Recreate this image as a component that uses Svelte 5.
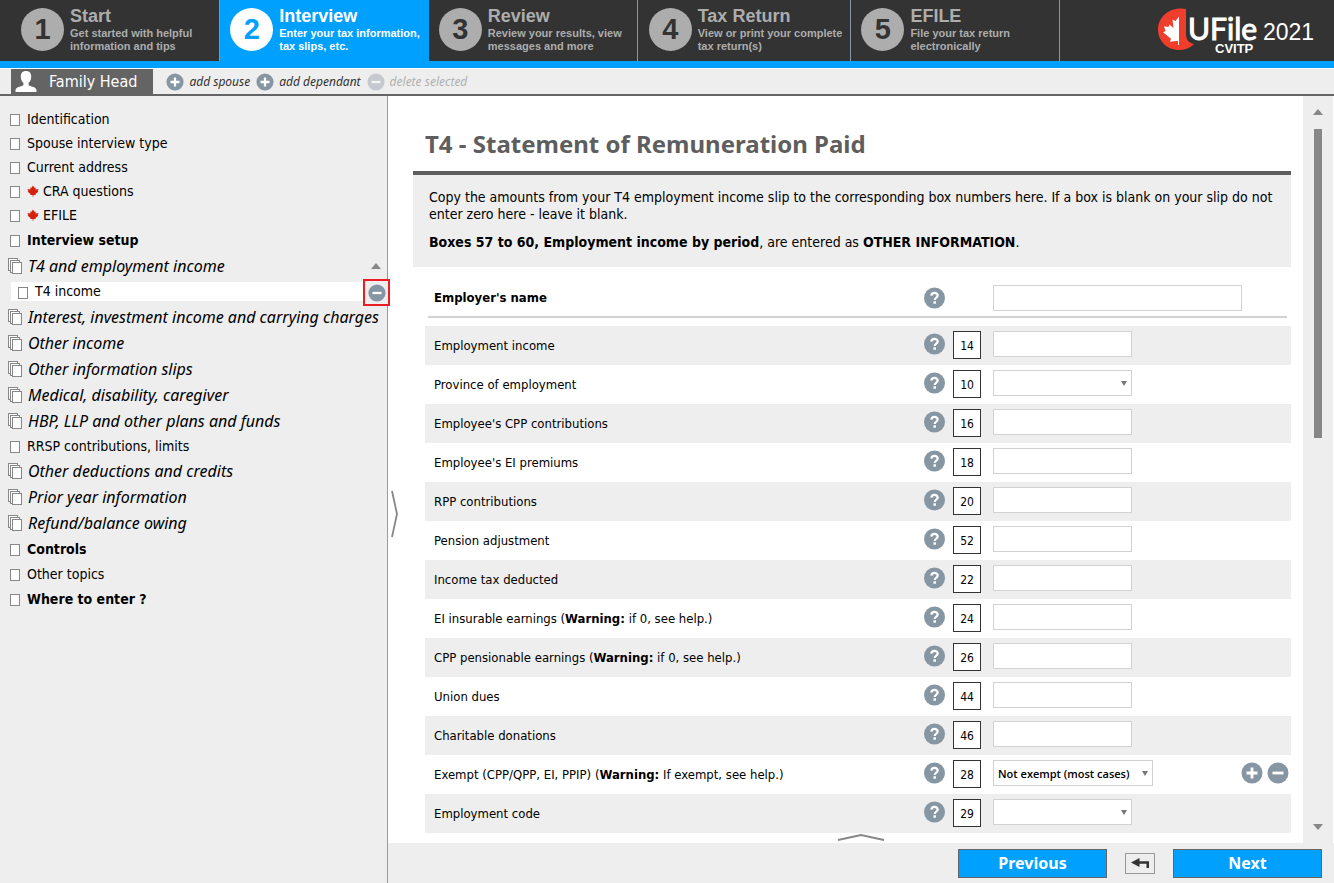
<script>
  const steps = [
    { n: 1, title: 'Start', lines: ['Get started with helpful', 'information and tips'] },
    { n: 2, title: 'Interview', lines: ['Enter your tax information,', 'tax slips, etc.'] },
    { n: 3, title: 'Review', lines: ['Review your results, view', 'messages and more'] },
    { n: 4, title: 'Tax Return', lines: ['View or print your complete', 'tax return(s)'] },
    { n: 5, title: 'EFILE', lines: ['File your tax return', 'electronically'] }
  ];
  const current = 2;

  const topics = [
    { text: 'Identification' },
    { text: 'Spouse interview type' },
    { text: 'Current address' },
    { text: 'CRA questions', leaf: true },
    { text: 'EFILE', leaf: true },
    { text: 'Interview setup', kind: 'strong' },
    { text: 'T4 and employment income', kind: 'group', open: true },
    { text: 'T4 income', kind: 'active' },
    { text: 'Interest, investment income and carrying charges', kind: 'group' },
    { text: 'Other income', kind: 'group' },
    { text: 'Other information slips', kind: 'group' },
    { text: 'Medical, disability, caregiver', kind: 'group' },
    { text: 'HBP, LLP and other plans and funds', kind: 'group' },
    { text: 'RRSP contributions, limits' },
    { text: 'Other deductions and credits', kind: 'group' },
    { text: 'Prior year information', kind: 'group' },
    { text: 'Refund/balance owing', kind: 'group' },
    { text: 'Controls', kind: 'strong' },
    { text: 'Other topics' },
    { text: 'Where to enter ?', kind: 'strong' }
  ];

  const fields = [
    { box: 14, label: 'Employment income' },
    { box: 10, label: 'Province of employment', options: [''] },
    { box: 16, label: "Employee's CPP contributions" },
    { box: 18, label: "Employee's EI premiums" },
    { box: 20, label: 'RPP contributions' },
    { box: 52, label: 'Pension adjustment' },
    { box: 22, label: 'Income tax deducted' },
    { box: 24, label: 'EI insurable earnings', warn: 'if 0, see help.' },
    { box: 26, label: 'CPP pensionable earnings', warn: 'if 0, see help.' },
    { box: 44, label: 'Union dues' },
    { box: 46, label: 'Charitable donations' },
    { box: 28, label: 'Exempt (CPP/QPP, EI, PPIP)', warn: 'If exempt, see help.', options: ['Not exempt (most cases)'], repeat: true },
    { box: 29, label: 'Employment code', options: [''] }
  ];
</script>

{#snippet sign(kind, size)}
  <svg width={size} height={size} viewBox="0 0 22 22" aria-hidden="true">
    <circle cx="11" cy="11" r="10.5" fill="#8796a3" />
    <path d={kind === 'plus' ? 'M5.5 11h11M11 5.5v11' : 'M5.5 11h11'} stroke="#fff" stroke-width="2.8" fill="none" />
  </svg>
{/snippet}

{#snippet help()}
  <button type="button" class="bare" aria-label="Help">
    <svg width="22" height="22" viewBox="0 0 22 22" aria-hidden="true">
      <circle cx="10.5" cy="11" r="10.5" fill="#8796a3" />
      <path d="M7.4 8.6C7.500 6.6 8.700 5.9 10.500 5.9s3.200.9 3.200 2.600c0 2.100-3 2-3 4.600" stroke="#fff" stroke-width="2.200" fill="none" />
      <rect x="9.400" y="14.300" width="2.600" height="2.400" fill="#fff" />
    </svg>
  </button>
{/snippet}

<div class="page">
  <header>
    <nav class="steps" aria-label="Steps">
      {#each steps as s}
        <a href="#step{s.n}" class="step" class:on={s.n === current}>
          <span class="num">{s.n}</span>
          <span class="words">
            <span class="name">{s.title}</span>
            <span class="hint">{s.lines[0]}<br />{s.lines[1]}</span>
          </span>
        </a>
      {/each}
    </nav>
    <svg class="logo" width="160" height="50" viewBox="0 0 160 50" aria-label="UFile CVITP 2021">
      <path d="M28 1C13 -2 0 8 0 21.500C0 33 9 42 21 42C27 42 32 40 36 36C31 35 28 32 28 26Z" fill="#f03e2d" />
      <path d="M21 8.500l-3.500 4.500-3-1.500 1 8.500-4-3.500-1 2.500-4.500-.800 1.500 5-2.500 1 8 6.500-1 3 8-1V37h1z" fill="#fff" />
      <text x="30" y="32" class="brand">UFile</text>
      <text x="57" y="45" class="sub">CVITP</text>
      <text x="105" y="32" class="year">2021</text>
    </svg>
  </header>

  <div class="people">
    <button class="person">
      <svg width="22" height="21" viewBox="0 0 22 21" aria-hidden="true">
        <path d="M11 0C7.500 0 5.800 2.200 5.800 5.500c0 2.700.900 5 2.600 6.300v2.400C5.500 15.800 1 15.800.5 19v2h21v-2c-.5-3.200-5-3.200-7.900-4.800v-2.400c1.700-1.300 2.600-3.600 2.600-6.300C16.200 2.200 14.500 0 11 0z" fill="#fff" />
      </svg>
      Family Head
    </button>
    <button class="act">{@render sign('plus', 18)}add spouse</button>
    <button class="act">{@render sign('plus', 18)}add dependant</button>
    <button class="act" disabled>{@render sign('minus', 18)}delete selected</button>
  </div>

  <div class="body">
    <nav class="side" aria-label="Interview topics">
      <ul>
        {#each topics as t}
          <li class={t.kind ?? 'plain'}>
            <a href="#topic">
              {#if t.kind === 'group'}
                <svg class="mark" width="16" height="17" viewBox="0 0 16 17" aria-hidden="true">
                  <g fill="#fff" stroke="#878787">
                    <rect x="1.500" y=".5" width="9" height="12" />
                    <rect x="3.500" y="2.500" width="9" height="12" />
                    <rect x="5.500" y="4.500" width="9" height="11" />
                  </g>
                </svg>
              {:else}
                <span class="sheet"></span>
              {/if}
              {#if t.leaf}
                <svg class="leaf" width="12" height="12" viewBox="0 0 12 12" aria-hidden="true">
                  <path d="M6 .5l1.500 2.300 1.200-.4-.2 2 3-.4-.8 2 .6.800L8.500 9l.2 1H6.400v1.800h-.8V10H3.300l.2-1L.7 6.800l.6-.8-.8-2 3 .4-.2-2 1.200.4z" fill="#d3210c" />
                </svg>
              {/if}
              {t.text}
            </a>
            {#if t.open}
              <svg class="fold" width="10" height="6" viewBox="0 0 10 6" aria-hidden="true"><path d="M0 6l5-6 5 6z" fill="#878787" /></svg>
            {/if}
            {#if t.kind === 'active'}
              <button class="remove" aria-label="Remove">{@render sign('minus', 18)}</button>
            {/if}
          </li>
        {/each}
      </ul>
    </nav>

    <div class="main">
      <div class="view">
        <main>
          <h1>T4 - Statement of Remuneration Paid</h1>
          <section class="info">
            <p>Copy the amounts from your T4 employment income slip to the corresponding box numbers here. If a box is blank on your slip do not enter zero here - leave it blank.</p>
            <p><b>Boxes 57 to 60, Employment income by period</b>, are entered as <b>OTHER INFORMATION</b>.</p>
          </section>
          <form>
            <div class="row employer">
              <label for="employer">Employer's name</label>
              {@render help()}
              <span></span>
              <input id="employer" type="text" />
            </div>
            {#each fields as f}
              <div class="row">
                <label for="box{f.box}">{f.label}{#if f.warn}{' '}(<b>Warning:</b> {f.warn}){/if}</label>
                {@render help()}
                <span class="box">{f.box}</span>
                <div class="control">
                  {#if f.options}
                    <select id="box{f.box}" class:wide={f.repeat}>
                      {#each f.options as o}<option>{o}</option>{/each}
                    </select>
                  {:else}
                    <input id="box{f.box}" type="text" />
                  {/if}
                  {#if f.repeat}
                    <span class="pair">
                      <button type="button" class="bare" aria-label="Add">{@render sign('plus', 22)}</button>
                      <button type="button" class="bare" aria-label="Remove">{@render sign('minus', 22)}</button>
                    </span>
                  {/if}
                </div>
              </div>
            {/each}
          </form>
        </main>
        <div class="bar" aria-hidden="true">
          <svg width="10" height="6" viewBox="0 0 10 6"><path d="M0 6l5-6 5 6z" fill="#878787" /></svg>
          <div class="track"><div class="thumb"></div></div>
          <svg width="10" height="6" viewBox="0 0 10 6"><path d="M0 0l5 6 5-6z" fill="#878787" /></svg>
        </div>
        <button class="bare pull-side" aria-label="Toggle topics">
          <svg width="8" height="48" viewBox="0 0 8 48"><path d="M1 1l5 23-5 23" fill="none" stroke="#878787" stroke-width="1.800" /></svg>
        </button>
        <button class="bare pull-up" aria-label="Toggle panel">
          <svg width="48" height="8" viewBox="0 0 48 8"><path d="M1 7l23-5 23 5" fill="none" stroke="#878787" stroke-width="1.800" /></svg>
        </button>
      </div>
      <footer>
        <button class="go">Previous</button>
        <button class="back" aria-label="Back">
          <svg width="18" height="14" viewBox="0 0 18 14"><path d="M0 6.500L8.500 2v3.200H18V12h-2.500V7.800H8.500V11z" fill="#333" /></svg>
        </button>
        <button class="go">Next</button>
      </footer>
    </div>
  </div>
</div>

<style>
  :global(body) { margin: 0; }
  .page, .page * { box-sizing: border-box; }
  .page {
    min-height: 100vh;
    display: flex;
    flex-direction: column;
    font: 14px/17px "DejaVu Sans Condensed", Tahoma, sans-serif;
    color: #000;
    background: #eee;
  }
  button { font: inherit; color: inherit; margin: 0; padding: 0; cursor: pointer; }
  a { color: inherit; text-decoration: none; }
  svg { display: block; flex: none; }
  .bare { border: 0; background: none; display: block; }

  header {
    display: flex;
    justify-content: space-between;
    background: #333;
    border-bottom: 7px solid #00a0ff;
    height: 68px;
    font-family: "Liberation Sans", Arial, sans-serif;
  }
  .steps { display: flex; }
  .step {
    display: flex;
    gap: 6px;
    padding: 8px 8px 0 10px;
    border-right: 1px solid #8796a3;
    color: #adadad;
    font-weight: bold;
    white-space: nowrap;
  }
  .step:first-child { padding-left: 21px; padding-right: 27px; }
  .step:nth-child(3) { padding-right: 15px; }
  .step:nth-child(4) { padding-left: 11px; }
  .step:last-child { padding-right: 49px; }
  .step.on { background: #00a0ff; color: #fff; border-color: #00a0ff; }
  .num {
    width: 43px;
    height: 43px;
    border-radius: 50%;
    background: #adadad;
    color: #333;
    font-size: 29px;
    line-height: 43px;
    text-align: center;
    flex: none;
  }
  .on .num { background: #fff; color: #00a0ff; }
  .name { display: block; font-size: 18px; line-height: 18px; margin-top: -1px; }
  .hint { display: block; font-size: 11px; line-height: 13px; margin-top: 2px; }
  .logo { margin: 8px 16px 0 0; fill: #fff; }
  .brand { font: 30px Lato, sans-serif; stroke: #fff; stroke-width: 1; }
  .sub { font: bold 13px "Liberation Sans", sans-serif; }
  .year { font: 23px "Liberation Sans", sans-serif; }

  .people {
    display: flex;
    align-items: center;
    gap: 6px;
    height: 28px;
    padding-left: 11px;
    border-top: 1px solid #fff;
    border-bottom: 2px solid #646464;
  }
  .person {
    display: flex;
    align-items: center;
    gap: 12px;
    height: 25px;
    padding: 0 16px 0 4px;
    margin-right: 7px;
    border: 0;
    background: #646464;
    color: #fff;
    font-size: 16px;
  }
  .act {
    display: flex;
    align-items: center;
    gap: 5px;
    border: 0;
    background: none;
    font: italic 12px/17px "Noto Sans", sans-serif;
    color: #333;
  }
  .act:disabled { color: #b0b0b0; }
  .act:disabled svg { opacity: .4; }

  .body { flex: 1; display: flex; }
  .side { width: 388px; flex: none; border-right: 1px solid #9a9a9a; padding: 11px 0; }
  ul { list-style: none; margin: 0; padding: 0; }
  li { display: flex; align-items: center; height: 24px; padding-left: 10px; }
  li a { display: flex; align-items: center; gap: 7px; flex: 1; white-space: nowrap; }
  .sheet { width: 10px; height: 12px; border: 1px solid #878787; background: #fff; flex: none; margin-top: 2px; }
  .leaf { margin-right: -3px; }
  li.strong { height: 26px; font-weight: bold; }
  li.group { height: 26px; padding-left: 7px; font: italic 16px/20px "Noto Sans", Tahoma, sans-serif; }
  li.group a { gap: 5px; }
  .fold { margin-right: 6px; }
  li.active { height: 25px; padding: 0; margin-left: 11px; position: relative; }
  li.active a { height: 19px; background: #fff; padding-left: 7px; }
  .remove {
    position: absolute;
    z-index: 1;
    right: -3px;
    top: 0;
    width: 27px;
    height: 27px;
    display: grid;
    place-items: center;
    background: #eee;
    border: 2px solid #ec1c24;
  }

  .main { flex: 1; min-width: 0; display: flex; flex-direction: column; }
  .view { flex: 1; display: flex; background: #fff; position: relative; }
  main { flex: 1; min-width: 0; padding: 31px 12px 8px 25px; }
  h1 {
    margin: 0;
    padding: 0 12px 11px;
    font: bold 24px/33px "Noto Sans", Tahoma, sans-serif;
    color: #5e5e5e;
    border-bottom: 4px solid #5e5e5e;
  }
  .info { background: #eee; padding: 14px 16px 16px; }
  p { margin: 0 0 11px; }
  p:last-child { margin: 0; }
  form { padding-left: 12px; font-size: 13px; }
  .row {
    display: grid;
    grid-template-columns: minmax(0, 1fr) 22px 28px 303px;
    column-gap: 7px;
    height: 39px;
    padding: 5px 0 0 9px;
  }
  .row:nth-child(even) { background: #eee; }
  .row label { line-height: 30px; }
  .row > :last-child { margin-left: 5px; }
  .row .bare { padding-top: 2px; align-self: start; }
  .row.employer {
    grid-template-columns: minmax(0, 1fr) 22px 28px 299px;
    height: 41px;
    margin: 10px 4px 8px 3px;
    padding: 8px 0 0 6px;
    border-bottom: 2px solid #d2d2d2;
    font-weight: bold;
  }
  .row.employer label { line-height: 26px; }
  .box { height: 28px; border: 1px solid #333; background: #fff; text-align: center; line-height: 28px; font-size: 12px; }
  input, select { width: 139px; height: 26px; margin: 0; border: 1px solid #d2d2d2; background: #fff; border-radius: 0; font: inherit; }
  .row > input { width: 249px; }
  select {
    appearance: none;
    padding: 0 4px;
    font: 600 11px "Open Sans", "Segoe UI", sans-serif;
    color: #000;
    background: #fff url("data:image/svg+xml,%3Csvg xmlns='http://www.w3.org/2000/svg' width='6' height='5'%3E%3Cpath d='M0 0h6L3 5z' fill='%23777'/%3E%3C/svg%3E") no-repeat right 4px center / 6px 5px;
  }
  select.wide { width: 160px; }
  .control { display: flex; justify-content: space-between; align-items: flex-start; }
  .pair { display: flex; gap: 4px; padding-right: 2px; }

  .bar { width: 30px; margin-right: 1px; background: #eee; display: flex; flex-direction: column; align-items: center; padding: 13px 0; }
  .track { flex: 1; padding: 14px 0; }
  .thumb { width: 8px; height: 45%; min-height: 309px; background: #878787; }
  .pull-side { position: absolute; left: 3px; top: 394px; }
  .pull-up { position: absolute; left: 449px; bottom: 2px; }

  footer { display: flex; justify-content: flex-end; align-items: center; gap: 18px; height: 40px; padding-right: 12px; }
  .go { width: 149px; height: 29px; border: 1px solid #646464; background: #00a0ff; color: #fff; font: bold 16px "Noto Sans", sans-serif; }
  .back { width: 30px; height: 21px; border: 1px solid #999; background: #eee; display: grid; place-items: center; }
</style>
